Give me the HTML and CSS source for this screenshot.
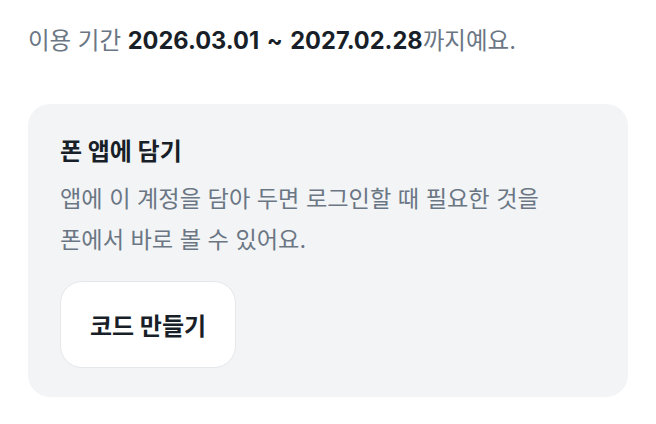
FILE: index.html
```html
<!DOCTYPE html>
<html lang="ko">
<head>
<meta charset="utf-8">
<link rel="stylesheet" href="styles.css">
</head>
<body>
<main class="page">
  <p class="period">이용 기간 <strong>2026.03.01 ~ 2027.02.28</strong>까지예요.</p>
  <section class="card">
    <h2 class="card-title">폰 앱에 담기</h2>
    <p class="card-desc">앱에 이 계정을 담아 두면 로그인할 때 필요한 것을<br>폰에서 바로 볼 수 있어요.</p>
    <button class="btn" type="button">코드 만들기</button>
  </section>
</main>
</body>
</html>
```

FILE: styles.css
```css
html, body {
  margin: 0;
  padding: 0;
  background: #ffffff;
}
body {
  font-family: Inter, "Noto Sans CJK KR", "Noto Sans", sans-serif;
  color: #191f28;
}
.page {
  padding: 25px 28px 0 28px;
  display: flex;
  flex-direction: column;
}
.period {
  margin: 0;
  font-size: 23.5px;
  line-height: 32px;
  color: #6b7684;
}
.period strong {
  color: #191f28;
  font-weight: 700;
  font-size: 23.6px;
  word-spacing: 2px;
}
.card {
  margin-top: 47px;
  background: #f2f4f6;
  border-radius: 22px;
  padding: 32px 32px 29px;
  display: flex;
  flex-direction: column;
  align-items: flex-start;
}
.card-title {
  margin: 0;
  font-size: 24px;
  line-height: 32px;
  font-weight: 700;
  color: #191f28;
}
.card-desc {
  margin: 11px 0 0;
  font-size: 23.2px;
  line-height: 41px;
  color: #6b7684;
}
.btn {
  margin-top: 20px;
  width: 176px;
  height: 87px;
  background: #ffffff;
  border: 1px solid #e5e8eb;
  border-radius: 22px;
  font-family: inherit;
  font-size: 24px;
  font-weight: 700;
  color: #191f28;
  cursor: pointer;
}
```
